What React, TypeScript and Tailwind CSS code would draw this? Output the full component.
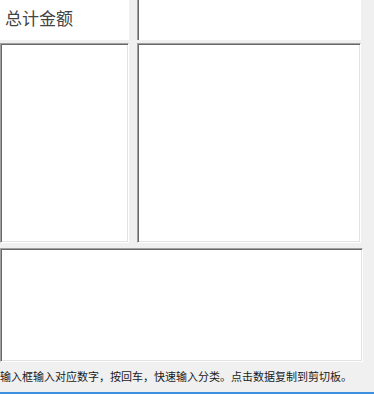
export default function App() {
  return (
    <div
      className="w-[374px] h-[394px] bg-[#f0f0f0] overflow-hidden flex flex-col"
      style={{ fontFamily: '"Noto Sans CJK SC", "Noto Sans", sans-serif' }}
    >
      {/* top row */}
      <div className="flex h-[40px] w-[361px]">
        <div className="w-[129px] bg-white pl-[5px] pt-[9px] text-[17px] text-[#444444] leading-none">
          总计金额
        </div>
        <div className="w-[8px]" />
        <div className="flex-1 bg-white border-l border-l-[#a0a0a0] shadow-[inset_1px_0_0_#696969]" />
      </div>

      {/* middle row */}
      <div className="flex h-[200px] w-[361px] mt-[3px]">
        <div className="w-[129px] bg-white border-t border-l border-t-[#a0a0a0] border-l-[#a0a0a0] border-b border-r border-b-white border-r-white shadow-[inset_1px_1px_0_#696969,inset_-1px_-1px_0_#e3e3e3]" />
        <div className="w-[8px]" />
        <div className="flex-1 bg-white border-t border-l border-t-[#a0a0a0] border-l-[#a0a0a0] border-b border-r border-b-white border-r-white shadow-[inset_1px_1px_0_#696969,inset_-1px_-1px_0_#e3e3e3]" />
      </div>

      {/* bottom box */}
      <div className="h-[114px] w-[363px] mt-[5px] bg-white border-t border-l border-t-[#a0a0a0] border-l-[#a0a0a0] border-b border-r border-b-white border-r-white shadow-[inset_1px_1px_0_#696969,inset_-1px_-1px_0_#e3e3e3]" />

      {/* status */}
      <div className="flex-1 flex items-center whitespace-nowrap text-[11px] text-[#1a1a1a] leading-none pb-[2px]">
        输入框输入对应数字，按回车，快速输入分类。点击数据复制到剪切板。
      </div>
      <div className="h-[2px] bg-[#3d8fe0]" />
    </div>
  );
}
